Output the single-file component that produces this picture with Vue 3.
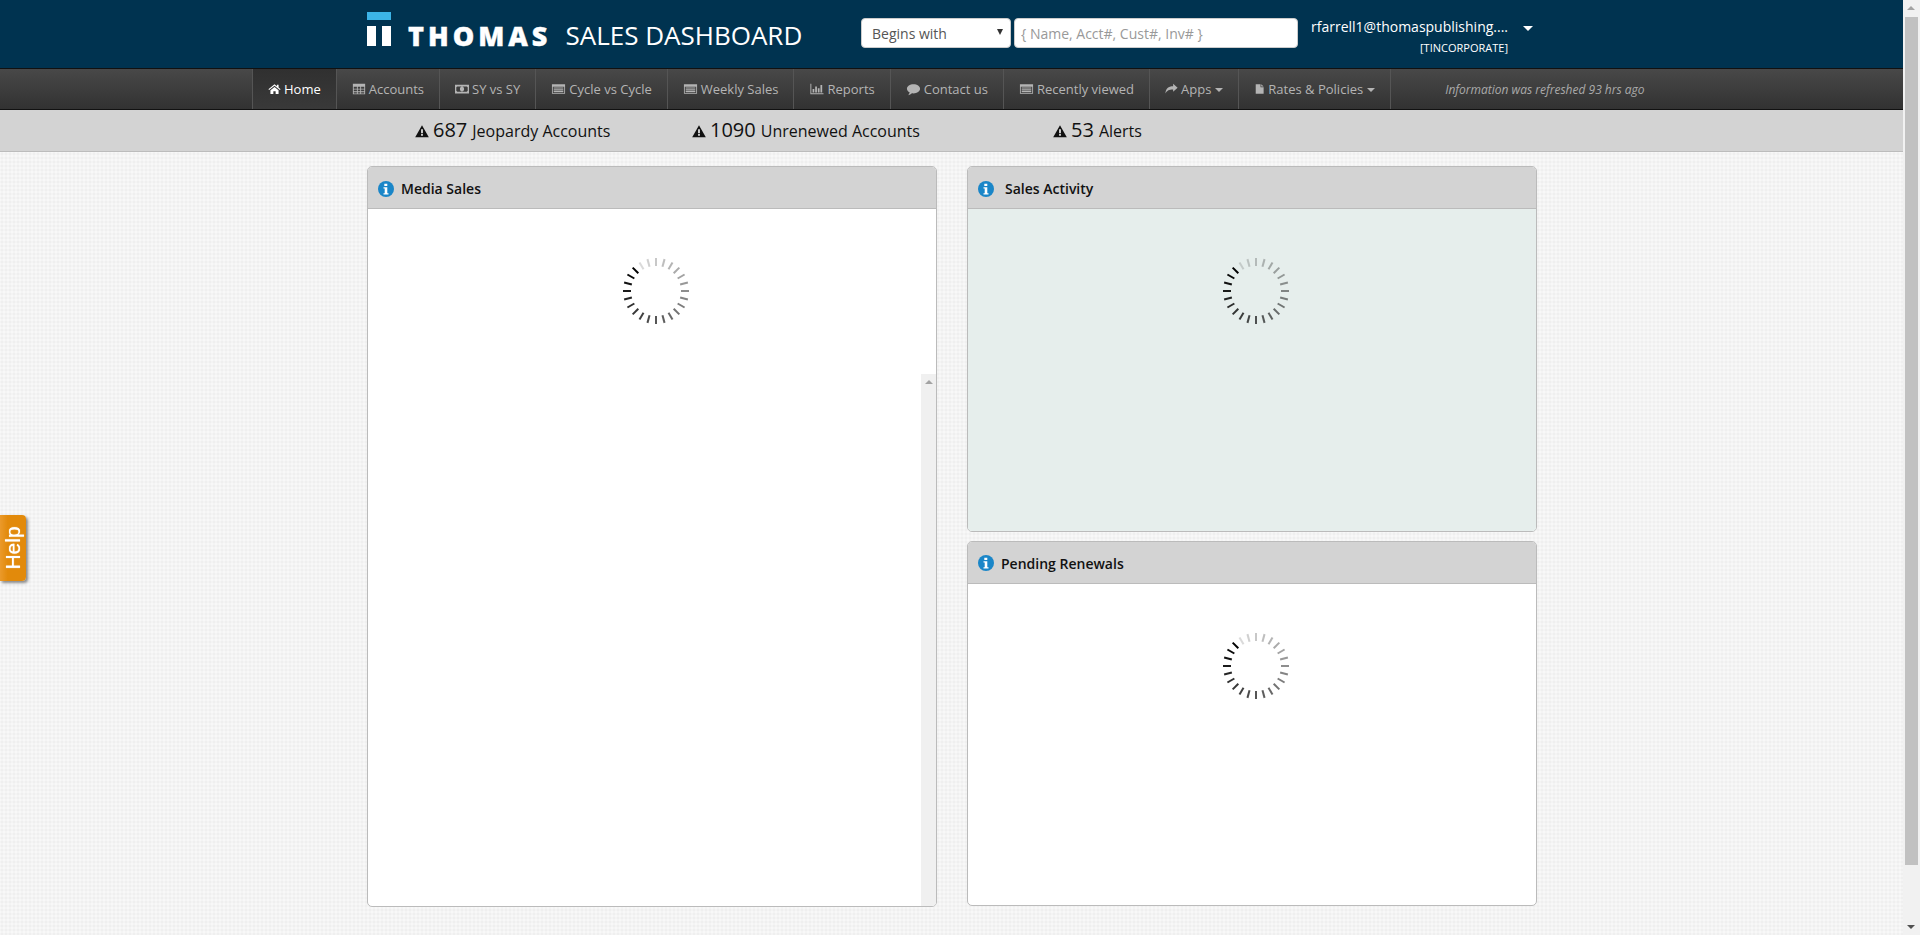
<template>
  <div class="page">
    <header class="topbar">
      <div class="logo">
        <div class="logo-mark">
          <span class="mark-top"></span>
          <div class="mark-bars"><span></span><span></span></div>
        </div>
        <span class="logo-word">THOMAS</span>
        <span class="logo-title">SALES DASHBOARD</span>
      </div>
      <div class="search">
        <div class="select-wrap">
          <select class="match-select">
            <option>Begins with</option>
          </select>
        </div>
        <input class="search-input" type="text" placeholder="{ Name, Acct#, Cust#, Inv# }" />
      </div>
      <div class="user">
        <div class="user-name">rfarrell1@thomaspublishing....</div>
        <div class="user-org">[TINCORPORATE]</div>
        <span class="user-caret"></span>
      </div>
    </header>

    <nav class="navbar">
      <a
        v-for="item in navItems"
        :key="item.label"
        class="nav-item"
        :class="{ active: item.active }"
      >
        <svg class="nav-icon" :class="`icon-${item.icon}`" viewBox="0 0 16 16"><path :d="icons[item.icon]" fill-rule="evenodd" /></svg>
        <span>{{ item.label }}</span>
        <span v-if="item.caret" class="nav-caret"></span>
      </a>
      <div class="refreshed">Information was refreshed 93 hrs ago</div>
    </nav>

    <div class="alerts">
      <div v-for="alert in alerts" :key="alert.label" class="alert-item" :class="alert.cls">
        <svg class="alert-icon" viewBox="0 0 16 16"><path :d="icons.warning" fill-rule="evenodd" /></svg>
        <span class="alert-num">{{ alert.count }}</span>
        <span class="alert-label">{{ alert.label }}</span>
      </div>
    </div>

    <main class="content">
      <section class="panel panel-media">
        <div class="panel-head">
          <svg class="info-icon" viewBox="0 0 16 16">
            <circle cx="8" cy="8" r="8" fill="#1a86c8" />
            <path :d="icons.info" fill="#fff" />
          </svg>
          <span class="panel-title">Media Sales</span>
        </div>
        <div class="panel-body">
          <svg class="spinner" viewBox="-35 -35 70 70">
            <line
              v-for="t in ticks"
              :key="t.angle"
              x1="0"
              y1="-25"
              x2="0"
              y2="-33"
              stroke="#000"
              stroke-width="2"
              :opacity="t.opacity"
              :transform="`rotate(${t.angle})`"
            />
          </svg>
          <div class="inner-scroll"><span class="inner-arrow"></span></div>
        </div>
      </section>

      <div class="right-col">
        <section class="panel">
          <div class="panel-head">
            <svg class="info-icon" viewBox="0 0 16 16">
              <circle cx="8" cy="8" r="8" fill="#1a86c8" />
              <path :d="icons.info" fill="#fff" />
            </svg>
            <span class="panel-title title-activity">Sales Activity</span>
          </div>
          <div class="panel-body body-tint">
            <svg class="spinner" viewBox="-35 -35 70 70">
              <line
                v-for="t in ticks"
                :key="t.angle"
                x1="0"
                y1="-25"
                x2="0"
                y2="-33"
                stroke="#000"
                stroke-width="2"
                :opacity="t.opacity"
                :transform="`rotate(${t.angle})`"
              />
            </svg>
          </div>
        </section>
        <section class="panel">
          <div class="panel-head">
            <svg class="info-icon" viewBox="0 0 16 16">
              <circle cx="8" cy="8" r="8" fill="#1a86c8" />
              <path :d="icons.info" fill="#fff" />
            </svg>
            <span class="panel-title">Pending Renewals</span>
          </div>
          <div class="panel-body">
            <svg class="spinner" viewBox="-35 -35 70 70">
              <line
                v-for="t in ticks"
                :key="t.angle"
                x1="0"
                y1="-25"
                x2="0"
                y2="-33"
                stroke="#000"
                stroke-width="2"
                :opacity="t.opacity"
                :transform="`rotate(${t.angle})`"
              />
            </svg>
          </div>
        </section>
      </div>
    </main>

    <div class="help-tab"><span>Help</span></div>

    <div class="page-scroll">
      <span class="scroll-up"></span>
      <span class="scroll-thumb"></span>
      <span class="scroll-down"></span>
    </div>
  </div>
</template>

<script setup>
const icons = {
  home: 'M8 2 .5 8.3l.9 1L8 3.9l6.6 5.4.9-1L13 6.2V2.8h-2v1.7zM3 9.6V14h3.6v-3.2h2.8V14H13V9.6L8 5.5z',
  table: 'M1 2h14v12H1zM2 5.4v2.2h3.6V5.4zm4.6 0v2.2h2.8V5.4zm3.8 0v2.2H14V5.4zM2 8.6v2h3.6v-2zm4.6 0v2h2.8v-2zm3.8 0v2H14v-2zM2 11.6V13h3.6v-1.4zm4.6 0V13h2.8v-1.4zm3.8 0V13H14v-1.4z',
  money: 'M0 3h16v10H0zM2.6 5 1.5 6v4l1.1 1h10.8l1.1-1V6l-1.1-1zM8 5.2c1.4 0 2.4 1.3 2.4 2.8s-1 2.8-2.4 2.8S5.6 9.500 5.600 8 6.600 5.200 8 5.200z',
  list: 'M.5 2.500h15v11H.5zM1.500 5.300v7.200h13V5.300zM2.500 6.200h11v1.300h-11zM2.500 8.300h11v1.300h-11zM2.500 10.400h11v1.300h-11z',
  chart: 'M1 2h1.100v10.900H16V14H1zM3.500 8h2v4h-2zM6.500 5h2v7h-2zM9.500 7h2v5h-2zM12.500 3.500h2V12h-2z',
  comment: 'M8 2.500c4.100 0 7.500 2.300 7.500 5.200S12.100 13 8 13c-.7 0-1.200 0-1.800-.1C5 14 3.600 14.700 2 15c.8-.9 1.400-2 1.600-3.200C1.600 10.900.5 9.400.5 7.700.5 4.800 3.900 2.500 8 2.500z',
  share: 'M15.500 6.500 10 1.500v3C4 4.500 1 7.500.5 13.500c1.500-3.200 4-5 9.500-5v3z',
  file: 'M2.500 1h7v4.500H14V15H2.500zM10.500 1 14 4.500h-3.500z',
  warning: 'M8 1.500 15.800 15H.2zM6.900 6v4.600h2.200V6zM6.900 11.400v2h2.200v-2z',
  info: 'M6.300 2.700h3v2.400h-3zM5.500 6.300h3.800v5.900h1.200v1.300h-5v-1.300h1.200V7.600H5.500z',
}

const navItems = [
  { label: 'Home', icon: 'home', active: true },
  { label: 'Accounts', icon: 'table' },
  { label: 'SY vs SY', icon: 'money' },
  { label: 'Cycle vs Cycle', icon: 'list' },
  { label: 'Weekly Sales', icon: 'list' },
  { label: 'Reports', icon: 'chart' },
  { label: 'Contact us', icon: 'comment' },
  { label: 'Recently viewed', icon: 'list' },
  { label: 'Apps', icon: 'share', caret: true },
  { label: 'Rates & Policies', icon: 'file', caret: true },
]

const alerts = [
  { count: 687, label: 'Jeopardy Accounts', cls: 'alert-a' },
  { count: 1090, label: 'Unrenewed Accounts', cls: 'alert-b' },
  { count: 53, label: 'Alerts', cls: 'alert-c' },
]

// darkest tick sits upper-left, fading counter-clockwise round the ring
const ticks = Array.from({ length: 24 }, (_, i) => ({
  angle: 315 - i * 15,
  opacity: (1 - (i / 23) * 0.86).toFixed(2),
}))
</script>

<style scoped>
.page {
  width: 1903px;
  font-family: 'Open Sans', 'Noto Sans', sans-serif;
  color: #111;
}

.topbar {
  display: flex;
  align-items: flex-start;
  height: 68px;
  padding-left: 367px;
  background: #003350;
  color: #fff;
  box-sizing: border-box;
}

.logo {
  display: flex;
  align-items: flex-start;
  width: 494px;
  flex-shrink: 0;
}

.logo-mark {
  width: 24px;
  margin-top: 12px;
}

.mark-top {
  display: block;
  height: 8px;
  background: #3cb4e7;
}

.mark-bars {
  display: flex;
  justify-content: space-between;
  margin-top: 6px;
}

.mark-bars span {
  width: 9px;
  height: 20px;
  background: #fff;
}

.logo-word {
  margin-left: 17px;
  margin-top: 17px;
  font-size: 27px;
  line-height: 38px;
  font-weight: 800;
  letter-spacing: 4px;
  -webkit-text-stroke: 0.4px #fff;
}

.logo-title {
  margin-left: 14px;
  margin-top: 17px;
  font-size: 26px;
  line-height: 36px;
  white-space: nowrap;
}

.search {
  display: flex;
  gap: 3px;
  margin-top: 18px;
}

.select-wrap {
  position: relative;
}

.select-wrap::after {
  content: '';
  position: absolute;
  right: 8px;
  top: 11px;
  border-left: 3.5px solid transparent;
  border-right: 3.5px solid transparent;
  border-top: 6px solid #333;
}

.match-select {
  appearance: none;
  display: block;
  width: 150px;
  height: 30px;
  padding: 0 0 0 10px;
  border: 1px solid #ccc;
  border-radius: 4px;
  background: #fff;
  color: #555;
  font: 14px 'Open Sans', sans-serif;
}

.search-input {
  display: block;
  width: 284px;
  height: 30px;
  padding: 0 6px;
  box-sizing: border-box;
  border: 1px solid #ccc;
  border-radius: 4px;
  background: #fff;
  font: 14px 'Open Sans', sans-serif;
}

.search-input::placeholder {
  color: #999;
}

.user {
  position: relative;
  width: 197px;
  margin-left: 13px;
  margin-top: 17px;
  text-align: right;
}

.user-name {
  font-size: 14px;
  line-height: 20px;
  white-space: nowrap;
}

.user-org {
  margin-top: 4px;
  font-size: 11px;
  line-height: 14px;
}

.user-caret {
  position: absolute;
  right: -25px;
  top: 9px;
  border-left: 5px solid transparent;
  border-right: 5px solid transparent;
  border-top: 5px solid #fff;
}

.navbar {
  display: flex;
  align-items: stretch;
  height: 42px;
  padding-left: 252px;
  box-sizing: border-box;
  border-top: 1px solid #111;
  border-bottom: 1px solid #111;
  background: linear-gradient(#484848, #323232);
}

.nav-item {
  display: flex;
  align-items: center;
  gap: 3px;
  padding: 0 15px;
  border-left: 1px solid #555;
  color: #b4b4b4;
  font-size: 13px;
  white-space: nowrap;
}

.nav-item:nth-child(10) {
  border-right: 1px solid #555;
}

.nav-item.active {
  background: linear-gradient(#303030, #393939);
  color: #fff;
}

.nav-icon {
  width: 14px;
  height: 14px;
  fill: currentColor;
  flex-shrink: 0;
}

.icon-home { width: 13px; }
.icon-list { width: 15px; }
.icon-chart { width: 15px; }
.icon-comment { width: 15px; }
.icon-share { width: 13px; }
.icon-file { width: 11px; }

.nav-caret {
  margin-left: 1px;
  margin-top: 2px;
  border-left: 4px solid transparent;
  border-right: 4px solid transparent;
  border-top: 4px solid currentColor;
}

.refreshed {
  margin-left: 54px;
  align-self: center;
  color: #aaa;
  font-size: 12px;
  font-style: italic;
  white-space: nowrap;
}

.alerts {
  display: flex;
  align-items: center;
  height: 42px;
  padding: 0 0 2px 415px;
  box-sizing: border-box;
  background: #d3d3d3;
  border-bottom: 1px solid #bcbcbc;
}

.alert-item {
  display: flex;
  align-items: baseline;
  gap: 4px;
}

.alert-a { width: 277px; }
.alert-b { width: 361px; }

.alert-icon {
  width: 14px;
  height: 14px;
  fill: #111;
  align-self: center;
  margin-top: 3px;
}

.alert-num {
  margin-right: 1px;
  font-size: 20px;
  line-height: 28px;
}

.alert-label {
  font-size: 16px;
}

.content {
  display: flex;
  gap: 30px;
  padding: 14px 0 0 367px;
  height: 741px;
}

.right-col {
  display: flex;
  flex-direction: column;
  gap: 9px;
  width: 570px;
  height: 740px;
}

.panel {
  position: relative;
  display: flex;
  flex-direction: column;
  flex: 1;
  min-height: 0;
  box-sizing: border-box;
  border: 1px solid #bbb;
  border-radius: 5px;
  background: #fff;
  overflow: hidden;
}

.panel-media {
  flex: none;
  width: 570px;
}

.panel-head {
  display: flex;
  align-items: center;
  gap: 7px;
  height: 42px;
  padding: 2px 0 0 10px;
  box-sizing: border-box;
  flex-shrink: 0;
  background: #d3d3d3;
  border-bottom: 1px solid #bbb;
}

.info-icon {
  width: 16px;
  height: 16px;
}

.panel-title {
  font-size: 14px;
  font-weight: 600;
  color: #111;
}

.title-activity {
  margin-left: 4px;
}

.panel-body {
  position: relative;
  flex: 1;
  display: flex;
  justify-content: center;
  align-items: flex-start;
  padding: 47px 0 0 7px;
}

.body-tint {
  background: #e6eeec;
}

.spinner {
  width: 70px;
  height: 70px;
}

.inner-scroll {
  position: absolute;
  right: 0;
  top: 165px;
  bottom: 0;
  width: 15px;
  background: #f0f0f0;
}

.inner-arrow {
  position: absolute;
  left: 4px;
  top: 6px;
  border-left: 4px solid transparent;
  border-right: 4px solid transparent;
  border-bottom: 4px solid #a3a3a3;
}

.help-tab {
  position: fixed;
  left: 0;
  top: 515px;
  width: 26px;
  height: 66px;
  display: flex;
  align-items: center;
  justify-content: center;
  box-sizing: border-box;
  border-radius: 0 4px 4px 0;
  background: linear-gradient(90deg, #eb9a2b, #e28a0b 30%);
  box-shadow: 2px 2px 3px #888;
  color: #fff;
  font-family: 'Liberation Sans', Arial, sans-serif;
  font-size: 21px;
  text-shadow: 0 0 1px #fff;
}

.help-tab span {
  transform: rotate(-90deg);
}

.page-scroll {
  position: fixed;
  right: 0;
  top: 0;
  bottom: 0;
  width: 17px;
  background: #f1f1f1;
}

.scroll-up {
  position: absolute;
  left: 4px;
  top: 6px;
  border-left: 4px solid transparent;
  border-right: 4px solid transparent;
  border-bottom: 4px solid #a3a3a3;
}

.scroll-thumb {
  position: absolute;
  left: 2px;
  right: 2px;
  top: 17px;
  height: 848px;
  background: #c1c1c1;
}

.scroll-down {
  position: absolute;
  left: 4px;
  bottom: 6px;
  border-left: 4px solid transparent;
  border-right: 4px solid transparent;
  border-top: 4px solid #505050;
}
</style>

<style>
html,
body {
  margin: 0;
  overflow: hidden;
  background-color: #f4f4f4;
  background-image:
    radial-gradient(#efefef 0.9px, transparent 1px),
    radial-gradient(#f8f8f8 0.9px, transparent 1px);
  background-size: 4px 4px;
  background-position: 0 0, 2px 2px;
}
</style>
